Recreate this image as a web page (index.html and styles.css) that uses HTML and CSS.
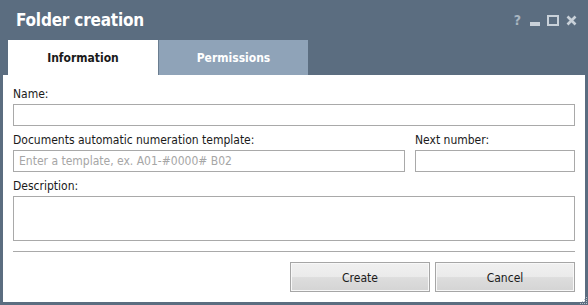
FILE: index.html
```html
<!DOCTYPE html>
<html lang="en">
<head>
    <meta charset="UTF-8">
    <title>Folder creation</title>
    <link rel="stylesheet" href="styles.css">
</head>
<body>
    <section class="window">
        <header class="title-bar">
            <h1>Folder creation</h1>
            <div class="window-tools">
                <span class="tool-help">?</span>
                <span class="tool-min"></span>
                <span class="tool-max"></span>
                <svg class="tool-close" width="11" height="11" viewBox="0 0 11 11">
                    <path d="M1.5 1.5 L9.5 9.5 M9.5 1.5 L1.5 9.5" stroke="#c9d1d9" stroke-width="2.6"/>
                </svg>
            </div>
        </header>
        <nav class="tabs">
            <a href="#" class="tab active">Information</a>
            <a href="#" class="tab">Permissions</a>
        </nav>
        <main class="panel">
            <div class="field">
                <label>Name:</label>
                <input type="text">
            </div>
            <div class="field-row">
                <div class="field">
                    <label>Documents automatic numeration template:</label>
                    <input type="text" placeholder="Enter a template, ex. A01-#0000# B02">
                </div>
                <div class="field">
                    <label>Next number:</label>
                    <input type="text">
                </div>
            </div>
            <div class="field">
                <label>Description:</label>
                <textarea></textarea>
            </div>
            <hr>
            <div class="actions">
                <button>Create</button>
                <button>Cancel</button>
            </div>
        </main>
        <svg class="grip" width="10" height="10" viewBox="0 0 10 10">
            <g fill="#b9c3cd">
                <rect x="8" y="2" width="1" height="1"/>
                <rect x="6" y="4" width="1" height="1"/><rect x="8" y="4" width="1" height="1"/>
                <rect x="4" y="6" width="1" height="1"/><rect x="6" y="6" width="1" height="1"/><rect x="8" y="6" width="1" height="1"/>
                <rect x="2" y="8" width="1" height="1"/><rect x="4" y="8" width="1" height="1"/><rect x="6" y="8" width="1" height="1"/><rect x="8" y="8" width="1" height="1"/>
            </g>
        </svg>
    </section>
</body>
</html>
```

FILE: styles.css
```css
*,::after,::before{
    padding: 0;
    margin: 0;
    box-sizing: border-box;
}

body{
    font-family: 'DejaVu Sans Condensed', 'DejaVu Sans', sans-serif;
    font-size: 12px;
    color: #1a1a1a;
    background-color: #5b6d80;
}

.window{
    position: relative;
    width: 588px;
    height: 305px;
    background-color: #5b6d80;
    display: flex;
    flex-direction: column;
}

.title-bar{
    height: 40px;
    display: flex;
    align-items: center;
    justify-content: space-between;
    padding: 0 11px 0 16px;
}

.title-bar h1{
    font-size: 17px;
    font-weight: bold;
    color: white;
    letter-spacing: -0.2px;
}

.window-tools{
    display: flex;
    align-items: center;
    gap: 7px;
    height: 11px;
}

.tool-help{
    font-size: 14px;
    font-weight: bold;
    color: #a9b5c1;
    line-height: 11px;
    margin-right: 2px;
}

.tool-min{
    width: 10px;
    height: 4px;
    margin-top: 7px;
    background-color: #c9d1d9;
}

.tool-max{
    width: 12px;
    height: 11px;
    border: 2px solid #c9d1d9;
}

.tabs{
    display: flex;
    height: 35px;
    padding-left: 8px;
}

.tab{
    width: 150px;
    display: flex;
    align-items: center;
    justify-content: center;
    text-decoration: none;
    font-weight: bold;
    font-size: 12px;
    color: white;
    background-color: #8fa3b8;
    border-left: 1px solid #6a7d90;
}

.tab.active{
    background-color: white;
    color: #1a1a1a;
    border-left: none;
}

.panel{
    flex: 1;
    margin: 0 3px 3px;
    background-color: white;
    padding: 11px 10px 0;
}

.field label{
    display: block;
    line-height: 16px;
    margin-bottom: 2px;
}

.field{
    margin-bottom: 6px;
}

input, textarea{
    display: block;
    width: 100%;
    height: 22px;
    border: 1px solid #a9a9a9;
    font-family: inherit;
    font-size: 12px;
    padding: 0 5px;
    outline: none;
    resize: none;
}

input::placeholder{
    color: #a6a6a6;
}

textarea{
    height: 45px;
}

.field-row{
    display: grid;
    grid-template-columns: 1fr 160px;
    gap: 10px;
}

hr{
    border: none;
    border-top: 1px solid #a9a9a9;
    margin-top: 10px;
}

.actions{
    display: flex;
    justify-content: flex-end;
    gap: 5px;
    margin-top: 10px;
}

.actions button{
    width: 140px;
    height: 30px;
    padding-top: 2px;
    border: 1px solid #a6a6a6;
    box-shadow: inset 0 0 0 1px #f8f8f8;
    background: linear-gradient(#f0f0f0, #ebebeb 48%, #dddddd 52%, #d4d4d4);
    font-family: inherit;
    font-size: 12px;
    color: #1a1a1a;
}

.grip{
    position: absolute;
    right: 0;
    bottom: 0;
}
```
